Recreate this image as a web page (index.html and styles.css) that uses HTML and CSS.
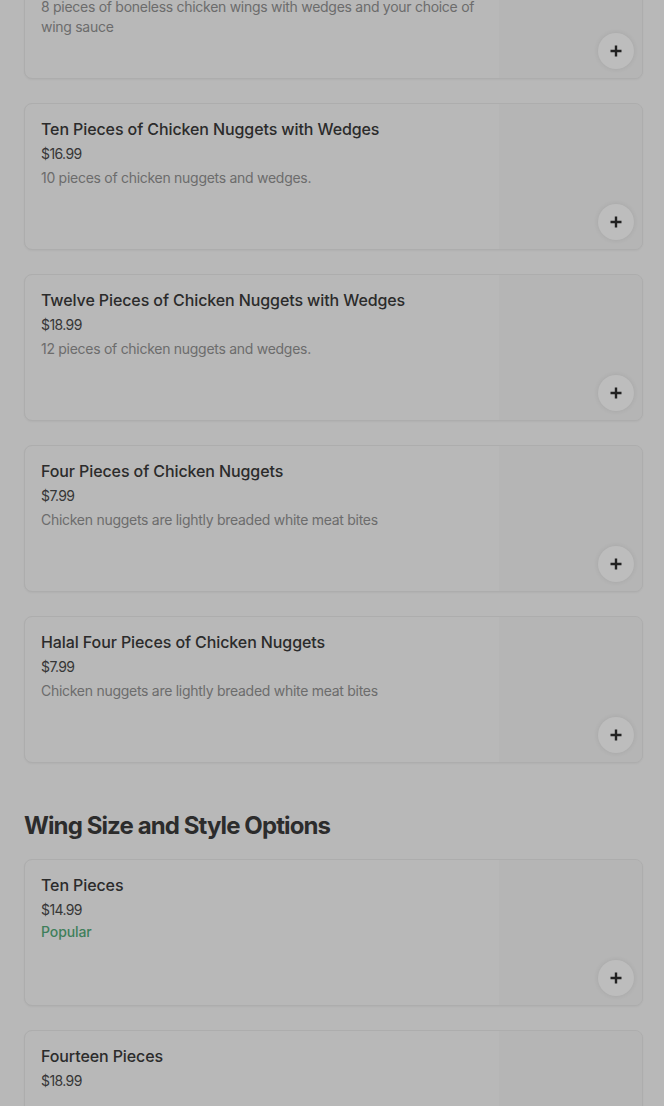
FILE: index.html
```html
<!DOCTYPE html>
<html lang="en">
<head>
<meta charset="utf-8">
<title>Menu</title>
<link rel="stylesheet" href="styles.css">
</head>
<body>
<main class="menu">
  <section class="section section-first">
    <ul class="items">
      <li class="card">
        <div class="info">
          <h3 class="title">Eight Pieces of Boneless Wings with Wedges</h3>
          <div class="price">$15.99</div>
          <p class="desc">8 pieces of boneless chicken wings with wedges and your choice of wing sauce</p>
        </div>
        <div class="thumb"><button class="add" aria-label="Add"><svg viewBox="0 0 14 14" width="14" height="14"><path d="M7 1.5v11M1.5 7h11" stroke="currentColor" stroke-width="2.4" fill="none"/></svg></button></div>
      </li>
      <li class="card">
        <div class="info">
          <h3 class="title">Ten Pieces of Chicken Nuggets with Wedges</h3>
          <div class="price">$16.99</div>
          <p class="desc">10 pieces of chicken nuggets and wedges.</p>
        </div>
        <div class="thumb"><button class="add" aria-label="Add"><svg viewBox="0 0 14 14" width="14" height="14"><path d="M7 1.5v11M1.5 7h11" stroke="currentColor" stroke-width="2.4" fill="none"/></svg></button></div>
      </li>
      <li class="card">
        <div class="info">
          <h3 class="title">Twelve Pieces of Chicken Nuggets with Wedges</h3>
          <div class="price">$18.99</div>
          <p class="desc">12 pieces of chicken nuggets and wedges.</p>
        </div>
        <div class="thumb"><button class="add" aria-label="Add"><svg viewBox="0 0 14 14" width="14" height="14"><path d="M7 1.5v11M1.5 7h11" stroke="currentColor" stroke-width="2.4" fill="none"/></svg></button></div>
      </li>
      <li class="card">
        <div class="info">
          <h3 class="title">Four Pieces of Chicken Nuggets</h3>
          <div class="price">$7.99</div>
          <p class="desc">Chicken nuggets are lightly breaded white meat bites</p>
        </div>
        <div class="thumb"><button class="add" aria-label="Add"><svg viewBox="0 0 14 14" width="14" height="14"><path d="M7 1.5v11M1.5 7h11" stroke="currentColor" stroke-width="2.4" fill="none"/></svg></button></div>
      </li>
      <li class="card">
        <div class="info">
          <h3 class="title">Halal Four Pieces of Chicken Nuggets</h3>
          <div class="price">$7.99</div>
          <p class="desc">Chicken nuggets are lightly breaded white meat bites</p>
        </div>
        <div class="thumb"><button class="add" aria-label="Add"><svg viewBox="0 0 14 14" width="14" height="14"><path d="M7 1.5v11M1.5 7h11" stroke="currentColor" stroke-width="2.4" fill="none"/></svg></button></div>
      </li>
    </ul>
  </section>
  <section class="section">
    <h2 class="section-title">Wing Size and Style Options</h2>
    <ul class="items">
      <li class="card">
        <div class="info">
          <h3 class="title">Ten Pieces</h3>
          <div class="price">$14.99</div>
          <div class="popular">Popular</div>
        </div>
        <div class="thumb"><button class="add" aria-label="Add"><svg viewBox="0 0 14 14" width="14" height="14"><path d="M7 1.5v11M1.5 7h11" stroke="currentColor" stroke-width="2.4" fill="none"/></svg></button></div>
      </li>
      <li class="card">
        <div class="info">
          <h3 class="title">Fourteen Pieces</h3>
          <div class="price">$18.99</div>
        </div>
        <div class="thumb"><button class="add" aria-label="Add"><svg viewBox="0 0 14 14" width="14" height="14"><path d="M7 1.5v11M1.5 7h11" stroke="currentColor" stroke-width="2.4" fill="none"/></svg></button></div>
      </li>
    </ul>
  </section>
</main>
</body>
</html>
```
FILE: styles.css
```css
* { box-sizing: border-box; }
html, body { margin: 0; padding: 0; }
body {
  background: #b8b8b8;
  font-family: Inter, "Noto Sans", "Liberation Sans", sans-serif;
  color: #2e2e2e;
  overflow: hidden;
  height: 1106px;
}
.menu {
  padding: 0 21px 0 24px;
}
.section-first {
  margin-top: -68px;
}
.items {
  list-style: none;
  margin: 0;
  padding: 0;
  display: flex;
  flex-direction: column;
  gap: 24px;
}
.card {
  display: flex;
  height: 147px;
  border: 1px solid #adadad;
  border-radius: 8px;
  background: #b8b8b8;
  overflow: hidden;
  box-shadow: 0 1px 2px rgba(0,0,0,0.04);
}
.info {
  flex: 1;
  min-width: 0;
  padding: 15px 16px 16px 16px;
}
.title {
  margin: 0;
  font-size: 16px;
  line-height: 20px;
  font-weight: 500;
  letter-spacing: -0.1px;
  color: #2b2b2b;
}
.price {
  margin-top: 5px;
  font-size: 14px;
  line-height: 20px;
  letter-spacing: -0.6px;
  color: #363636;
}
.desc {
  margin: 4px 0 0;
  font-size: 14px;
  line-height: 20px;
  letter-spacing: -0.28px;
  color: #6c6c6c;
}
.popular {
  margin-top: 2px;
  font-size: 14px;
  line-height: 20px;
  font-weight: 500;
  letter-spacing: -0.1px;
  color: #3f7f5b;
}
.thumb {
  width: 143px;
  flex: none;
  background: #b5b5b5;
  display: flex;
  align-items: flex-end;
  justify-content: flex-end;
  padding: 0 8px 9px 0;
}
.add {
  width: 36px;
  height: 36px;
  border-radius: 50%;
  border: none;
  background: #bdbdbd;
  color: #222;
  box-shadow: 0 0 5px rgba(0,0,0,0.09);
  display: flex;
  align-items: center;
  justify-content: center;
  padding: 0;
}
.section-title {
  margin: 47px 0 17px;
  font-size: 24px;
  line-height: 32px;
  font-weight: 700;
  letter-spacing: -0.9px;
  color: #2c2c2c;
}
```
